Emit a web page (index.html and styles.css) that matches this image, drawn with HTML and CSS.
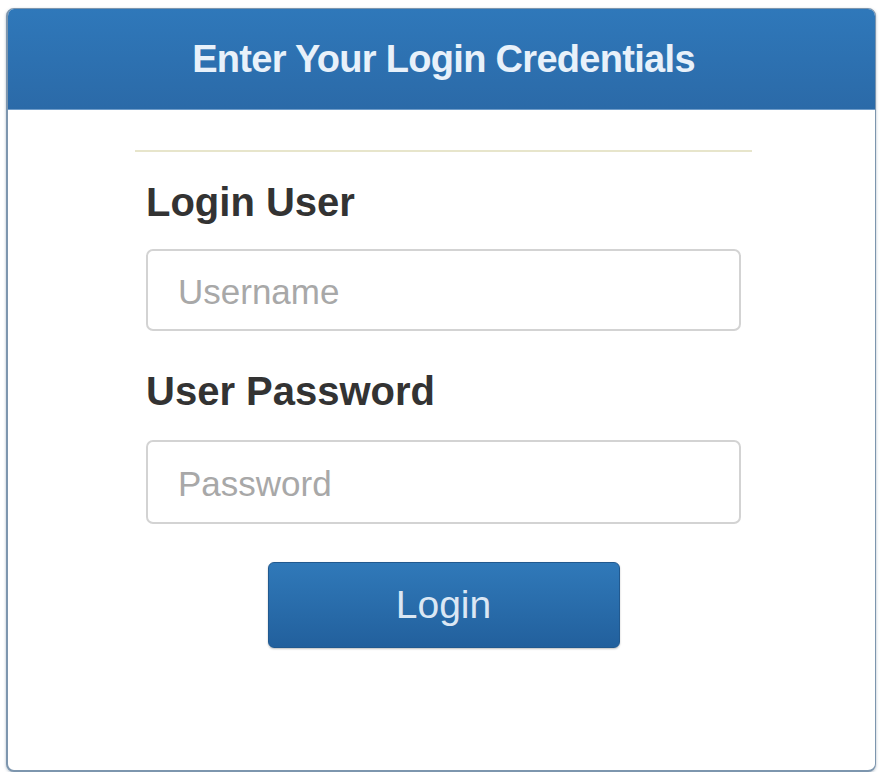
FILE: index.html
```html
<!DOCTYPE html>
<html>
<head>
<meta charset="utf-8">
<link rel="stylesheet" href="styles.css">
</head>
<body>
<div class="card">
  <div class="card-header">Enter Your Login Credentials</div>
  <div class="card-body">
    <div class="divider"></div>
    <form class="form">
      <label class="label" for="u">Login User</label>
      <input class="field field-user" id="u" type="text" placeholder="Username">
      <label class="label label-pass" for="p">User Password</label>
      <input class="field field-pass" id="p" type="password" placeholder="Password">
      <button class="btn" type="button">Login</button>
    </form>
  </div>
</div>
</body>
</html>
```
FILE: styles.css
```css
html, body {
  margin: 0;
  padding: 0;
  background: #ffffff;
}
body {
  padding: 8px 0 0 6px;
  font-family: "Liberation Sans", Arial, sans-serif;
}
.card {
  box-sizing: border-box;
  width: 870px;
  height: 764px;
  border: 1px solid #7d96ae;
  border-left-width: 2px;
  border-bottom-width: 2px;
  border-radius: 8px;
  overflow: hidden;
  background: #ffffff;
  box-shadow: 0 1px 3px rgba(60, 90, 120, 0.4);
  display: flex;
  flex-direction: column;
}
.card-header {
  height: 100px;
  line-height: 100px;
  flex: none;
  background: linear-gradient(#2f78ba, #2b6aa8);
  border-bottom: 1px solid #6f9cc9;
  color: #e8f1fa;
  font-size: 38px;
  font-weight: bold;
  letter-spacing: -0.7px;
  text-align: center;
  padding-left: 4px;
}
.card-body {
  padding: 40px 123px 0 127px;
}
.divider {
  width: 617px;
  height: 2px;
  background: #e7e5cb;
}
.form {
  display: flex;
  flex-direction: column;
  padding: 0 11px;
  width: 595px;
}
.label {
  font-size: 40px;
  line-height: 44px;
  font-weight: bold;
  color: #333333;
  margin: 28px 0 0 0;
}
.label-pass {
  margin-top: 38px;
}
.field {
  box-sizing: border-box;
  width: 595px;
  height: 82px;
  margin-top: 25px;
  border: 2px solid #d3d3d3;
  border-radius: 7px;
  padding: 3px 0 0 30px;
  font-family: "Liberation Sans", Arial, sans-serif;
  font-size: 35px;
  color: #555555;
  background: #ffffff;
  outline: none;
}
.field-pass {
  height: 84px;
  margin-top: 27px;
}
.field::placeholder {
  color: #a8a8a8;
  opacity: 1;
}
.btn {
  align-self: center;
  width: 352px;
  height: 86px;
  margin-top: 38px;
  border: 1px solid #21598f;
  border-radius: 6px;
  background: linear-gradient(#3079b9, #22609d);
  color: #dbe7f4;
  font-family: "Liberation Sans", Arial, sans-serif;
  font-size: 39px;
  padding: 0;
  box-shadow: 0 1px 2px rgba(0, 0, 0, 0.25);
  cursor: pointer;
}
```
